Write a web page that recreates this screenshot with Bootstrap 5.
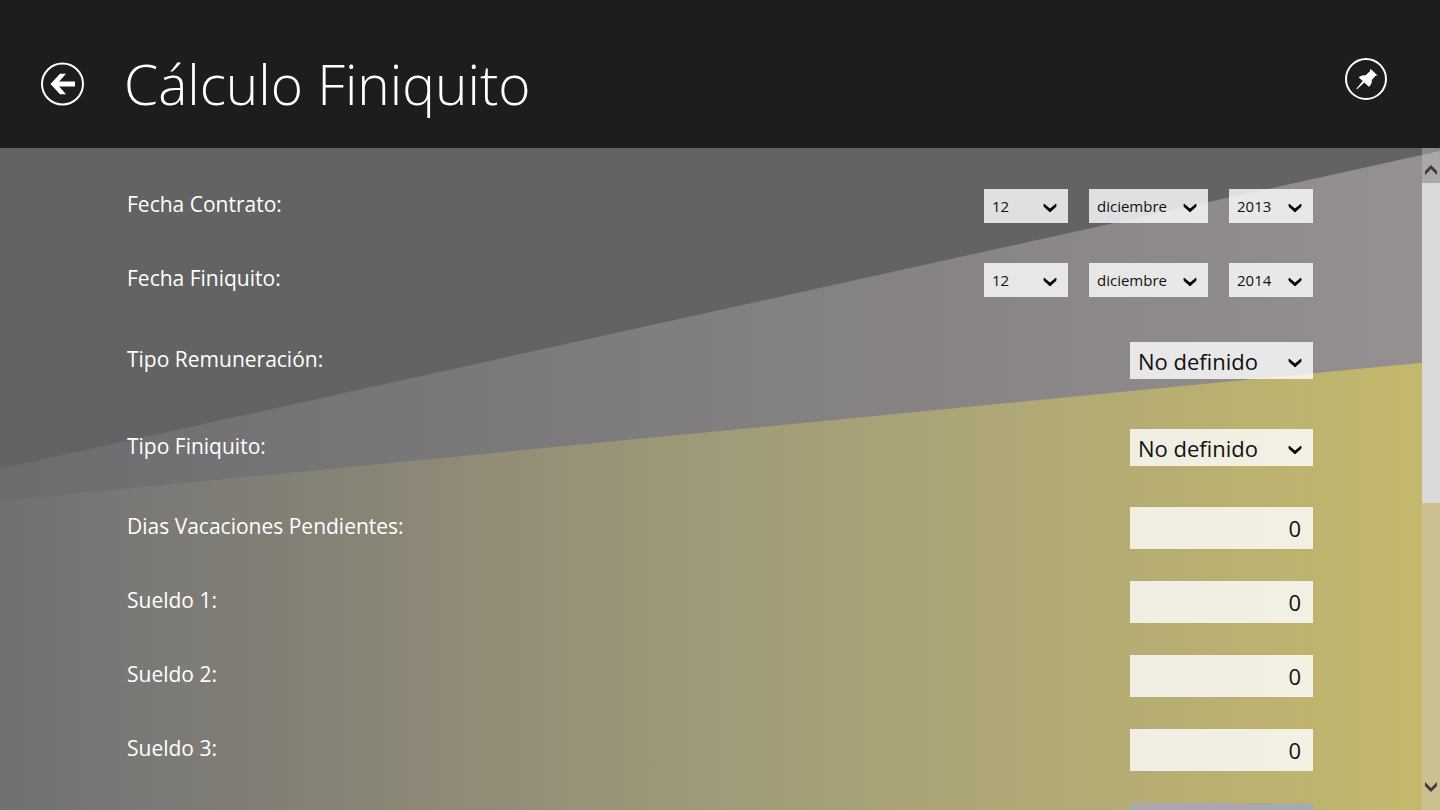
<!DOCTYPE html>
<html lang="es">
<head>
<meta charset="utf-8">
<meta name="viewport" content="width=device-width, initial-scale=1">
<title>Cálculo Finiquito</title>
<link href="https://cdn.jsdelivr.net/npm/bootstrap@5.3.0/dist/css/bootstrap.min.css" rel="stylesheet">
<style>
  body { font-family: "Open Sans", "Noto Sans", sans-serif; background: #1d1d1d; }
  .app-header { background: #1d1d1d; padding: 20px 52px 0 40px; height: 148px; gap: 40px; }
  .app-title { font-size: 55px; font-weight: 300; line-height: 80px; }
  .round-btn { width: 44px; height: 44px; color: #fff; }
  .pin-btn { margin-bottom: 10px; }
  .form-area { padding: 41px 109px 0 127px; }
  .form-area label { font-size: 21px; line-height: 28px; color: #fff; }
  .field-row { margin-bottom: 32px; }
  .date-row { margin-bottom: 40px; }
  .date-row-last { margin-bottom: 45px; }
  .type-row { margin-bottom: 50px; }
  .type-row-last { margin-bottom: 41px; }
  .date-group { gap: 21px; }
  .field-row label { padding-bottom: 4px; }
  .metro-field, .metro-field:focus {
    border: 0; border-radius: 0; color: #111; box-shadow: none;
    background-color: rgba(255, 255, 255, .8);
  }
  .metro-select {
    background-image: url("data:image/svg+xml,%3Csvg xmlns='http://www.w3.org/2000/svg' viewBox='0 0 14 10'%3E%3Cpath d='M1 1v2.600l6 5.400 6-5.400V1L7 6z' fill='%23000' stroke='%23000' stroke-width='.8'/%3E%3C/svg%3E");
    background-size: 14px 10px; background-position: right 11px top 14px;
  }
  .date-select { width: 84px; height: 34px; padding: 0 28px 0 8px; font-size: 15px; line-height: 20px; }
  .month-select { width: 119px; }
  .type-select { width: 183px; height: 37px; padding: 0 30px 0 8px; font-size: 22px; line-height: 30px; background-position: right 11px top 16px; }
  .amount-input { width: 183px; height: 42px; padding: 0 12px; font-size: 22px; line-height: 30px; text-align: right; }
  .amount-input:disabled { background-color: #a9a8ab; }
  .scroll-rail { width: 18px; background: rgba(216, 210, 215, .35); }
  .scroll-step { height: 35px; color: #3f3b3d; }
  .scroll-up { padding: 8px 0 0; }
  .scroll-down { padding: 0 0 12px; }
  .scroll-thumb { height: 54%; background: #d9d9d9; }
</style>
</head>
<body class="vh-100 d-flex flex-column overflow-hidden">
<header class="app-header d-flex align-items-center text-white flex-shrink-0">
  <button type="button" class="round-btn btn p-0 border-0 rounded-circle d-flex" aria-label="Volver">
    <svg viewBox="0 0 44 44" width="44" height="44" fill="none" aria-hidden="true">
      <circle cx="22.500" cy="22" r="20.500" stroke="#fff" stroke-width="2"/>
      <path d="M10.500 22L20 11.800h6L19.200 19.500H35v5H19.200L26 32.200h-6z" fill="#fff"/>
    </svg>
  </button>
  <h1 class="app-title m-0 flex-grow-1">Cálculo Finiquito</h1>
  <button type="button" class="round-btn pin-btn btn p-0 border-0 rounded-circle d-flex" aria-label="Anclar">
    <svg viewBox="0 0 44 44" width="44" height="44" fill="none" aria-hidden="true">
      <circle cx="22" cy="22" r="20" stroke="#fff" stroke-width="2"/>
      <path d="M26.500 11.700L33.300 18.300L31.400 19.100L27.800 22.900C28.200 25.400 27 28.200 24.800 29.800L20.300 25.500L13 32.300L12.300 31.700L18.700 24L14.600 20.300C16.800 18.500 19.200 17.900 21.700 18.300L25.900 14.300Z" fill="#fff"/>
    </svg>
  </button>
</header>

<main class="position-relative flex-grow-1 d-flex overflow-hidden">
  <svg class="position-absolute top-0 start-0 w-100 h-100" viewBox="0 0 1440 662" preserveAspectRatio="none" aria-hidden="true">
    <defs>
      <linearGradient id="greyBand" gradientUnits="userSpaceOnUse" x1="0" y1="0" x2="1440" y2="0">
        <stop offset="0" stop-color="#6c6c6e"/><stop offset=".33" stop-color="#7a797a"/>
        <stop offset=".66" stop-color="#888485"/><stop offset="1" stop-color="#959192"/>
      </linearGradient>
      <linearGradient id="goldBand" gradientUnits="userSpaceOnUse" x1="0" y1="0" x2="1440" y2="0">
        <stop offset="0" stop-color="#707071"/><stop offset=".1" stop-color="#7b7976"/>
        <stop offset=".22" stop-color="#848175"/>
        <stop offset=".33" stop-color="#918b77"/><stop offset=".5" stop-color="#9f9b78"/>
        <stop offset=".75" stop-color="#b3aa75"/><stop offset="1" stop-color="#c5b96b"/>
      </linearGradient>
    </defs>
    <rect width="1440" height="662" fill="#636363"/>
    <path d="M0 321L1440 3V662H0z" fill="url(#greyBand)"/>
    <path d="M0 353L1440 213V662H0z" fill="url(#goldBand)"/>
  </svg>

  <form class="form-area position-relative flex-grow-1 overflow-hidden">
    <div class="field-row date-row d-flex justify-content-between align-items-center">
      <label for="contratoDia">Fecha Contrato:</label>
      <div class="date-group d-flex">
        <select id="contratoDia" class="form-select metro-field metro-select date-select"><option>12</option></select>
        <select aria-label="Mes de contrato" class="form-select metro-field metro-select date-select month-select"><option>diciembre</option></select>
        <select aria-label="Año de contrato" class="form-select metro-field metro-select date-select"><option>2013</option></select>
      </div>
    </div>
    <div class="field-row date-row-last d-flex justify-content-between align-items-center">
      <label for="finiquitoDia">Fecha Finiquito:</label>
      <div class="date-group d-flex">
        <select id="finiquitoDia" class="form-select metro-field metro-select date-select"><option>12</option></select>
        <select aria-label="Mes de finiquito" class="form-select metro-field metro-select date-select month-select"><option>diciembre</option></select>
        <select aria-label="Año de finiquito" class="form-select metro-field metro-select date-select"><option>2014</option></select>
      </div>
    </div>
    <div class="field-row type-row d-flex justify-content-between align-items-center">
      <label for="tipoRemuneracion">Tipo Remuneración:</label>
      <select id="tipoRemuneracion" class="form-select metro-field metro-select type-select"><option>No definido</option></select>
    </div>
    <div class="field-row type-row-last d-flex justify-content-between align-items-center">
      <label for="tipoFiniquito">Tipo Finiquito:</label>
      <select id="tipoFiniquito" class="form-select metro-field metro-select type-select"><option>No definido</option></select>
    </div>
    <div class="field-row d-flex justify-content-between align-items-center">
      <label for="diasVacaciones">Dias Vacaciones Pendientes:</label>
      <input id="diasVacaciones" class="form-control metro-field amount-input" type="text" inputmode="numeric" value="0">
    </div>
    <div class="field-row d-flex justify-content-between align-items-center">
      <label for="sueldo1">Sueldo 1:</label>
      <input id="sueldo1" class="form-control metro-field amount-input" type="text" inputmode="numeric" value="0">
    </div>
    <div class="field-row d-flex justify-content-between align-items-center">
      <label for="sueldo2">Sueldo 2:</label>
      <input id="sueldo2" class="form-control metro-field amount-input" type="text" inputmode="numeric" value="0">
    </div>
    <div class="field-row d-flex justify-content-between align-items-center">
      <label for="sueldo3">Sueldo 3:</label>
      <input id="sueldo3" class="form-control metro-field amount-input" type="text" inputmode="numeric" value="0">
    </div>
    <div class="d-flex justify-content-end">
      <input class="form-control metro-field amount-input" type="text" aria-label="Total" disabled>
    </div>
  </form>

  <div class="scroll-rail position-relative d-flex flex-column flex-shrink-0">
    <button type="button" class="scroll-step scroll-up btn border-0 rounded-0 d-flex justify-content-center align-items-center" aria-label="Subir">
      <svg width="12" height="10" viewBox="0 0 12 10" aria-hidden="true"><path d="M0 10V6L6 0l6 6v4L6 4z" fill="currentColor"/></svg>
    </button>
    <div class="flex-grow-1"><div class="scroll-thumb"></div></div>
    <button type="button" class="scroll-step scroll-down btn border-0 rounded-0 d-flex justify-content-center align-items-center" aria-label="Bajar">
      <svg width="12" height="10" viewBox="0 0 12 10" aria-hidden="true"><path d="M0 0v4l6 6 6-6V0L6 6z" fill="currentColor"/></svg>
    </button>
  </div>
</main>
<script src="https://cdn.jsdelivr.net/npm/bootstrap@5.3.0/dist/js/bootstrap.bundle.min.js"></script>
</body>
</html>
